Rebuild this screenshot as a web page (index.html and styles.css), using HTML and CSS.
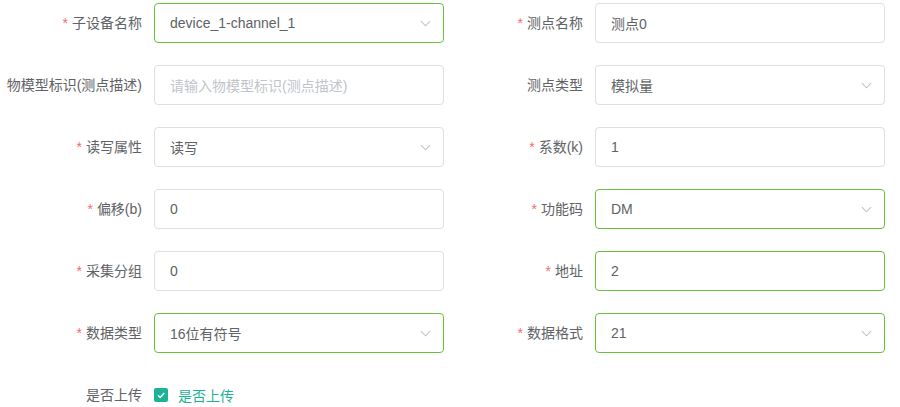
FILE: index.html
```html
<!DOCTYPE html>
<html lang="zh">
<head>
<meta charset="utf-8">
<link rel="stylesheet" href="styles.css">
</head>
<body>
<form class="form">
  <div class="item left">
    <label class="label"><span class="req">*</span>子设备名称</label>
    <div class="input success select"><span class="val">device_1-channel_1</span><svg class="arrow" viewBox="0 0 12 7"><polyline points="1,1 6,6 11,1"/></svg></div>
  </div>
  <div class="item right">
    <label class="label"><span class="req">*</span>测点名称</label>
    <div class="input"><span class="val">测点0</span></div>
  </div>

  <div class="item left">
    <label class="label">物模型标识(测点描述)</label>
    <div class="input"><span class="ph">请输入物模型标识(测点描述)</span></div>
  </div>
  <div class="item right">
    <label class="label">测点类型</label>
    <div class="input select"><span class="val">模拟量</span><svg class="arrow" viewBox="0 0 12 7"><polyline points="1,1 6,6 11,1"/></svg></div>
  </div>

  <div class="item left">
    <label class="label"><span class="req">*</span>读写属性</label>
    <div class="input select"><span class="val">读写</span><svg class="arrow" viewBox="0 0 12 7"><polyline points="1,1 6,6 11,1"/></svg></div>
  </div>
  <div class="item right">
    <label class="label"><span class="req">*</span>系数(k)</label>
    <div class="input"><span class="val">1</span></div>
  </div>

  <div class="item left">
    <label class="label"><span class="req">*</span>偏移(b)</label>
    <div class="input"><span class="val">0</span></div>
  </div>
  <div class="item right">
    <label class="label"><span class="req">*</span>功能码</label>
    <div class="input success select"><span class="val">DM</span><svg class="arrow" viewBox="0 0 12 7"><polyline points="1,1 6,6 11,1"/></svg></div>
  </div>

  <div class="item left">
    <label class="label"><span class="req">*</span>采集分组</label>
    <div class="input"><span class="val">0</span></div>
  </div>
  <div class="item right">
    <label class="label"><span class="req">*</span>地址</label>
    <div class="input success"><span class="val">2</span></div>
  </div>

  <div class="item left">
    <label class="label"><span class="req">*</span>数据类型</label>
    <div class="input success select"><span class="val">16位有符号</span><svg class="arrow" viewBox="0 0 12 7"><polyline points="1,1 6,6 11,1"/></svg></div>
  </div>
  <div class="item right">
    <label class="label"><span class="req">*</span>数据格式</label>
    <div class="input success select"><span class="val">21</span><svg class="arrow" viewBox="0 0 12 7"><polyline points="1,1 6,6 11,1"/></svg></div>
  </div>

  <div class="item left">
    <label class="label">是否上传</label>
    <div class="check">
      <span class="box"><svg viewBox="0 0 14 14"><polyline points="4,7.2 6.2,9.4 10.2,5"/></svg></span>
      <span class="check-text">是否上传</span>
    </div>
  </div>
</form>
</body>
</html>
```

FILE: styles.css
```css
* { box-sizing: border-box; }
html, body {
  margin: 0;
  padding: 0;
  background: #fff;
}
body {
  font-family: "Liberation Sans", "Noto Sans CJK SC", sans-serif;
  font-size: 14px;
  color: #606266;
}
.form {
  display: grid;
  grid-template-columns: 450px 450px;
  row-gap: 22px;
  padding-top: 3px;
}
.item {
  display: flex;
  align-items: center;
  height: 40px;
}
.label {
  flex: none;
  text-align: right;
  padding-right: 12px;
  color: #606266;
  line-height: 40px;
  white-space: nowrap;
}
.left .label { width: 154px; }
.right .label { width: 145px; }
.req {
  color: #f56c6c;
  margin-right: 4px;
}
.input {
  width: 290px;
  height: 40px;
  border: 1px solid #dcdfe6;
  border-radius: 4px;
  display: flex;
  align-items: center;
  padding: 0 15px;
  position: relative;
}
.input.success { border-color: #67c23a; }
.val { color: #606266; }
.ph { color: #c0c4cc; }
.arrow {
  position: absolute;
  right: 12px;
  top: 16px;
  width: 11px;
  height: 7px;
  fill: none;
  stroke: #c0c4cc;
  stroke-width: 1.2;
}
.check {
  display: flex;
  align-items: center;
  gap: 10px;
}
.box {
  width: 14px;
  height: 14px;
  border-radius: 2px;
  background: #1ab394;
  display: flex;
}
.box svg {
  width: 14px;
  height: 14px;
  fill: none;
  stroke: #fff;
  stroke-width: 1.4;
}
.check-text { color: #1ab394; }
```
